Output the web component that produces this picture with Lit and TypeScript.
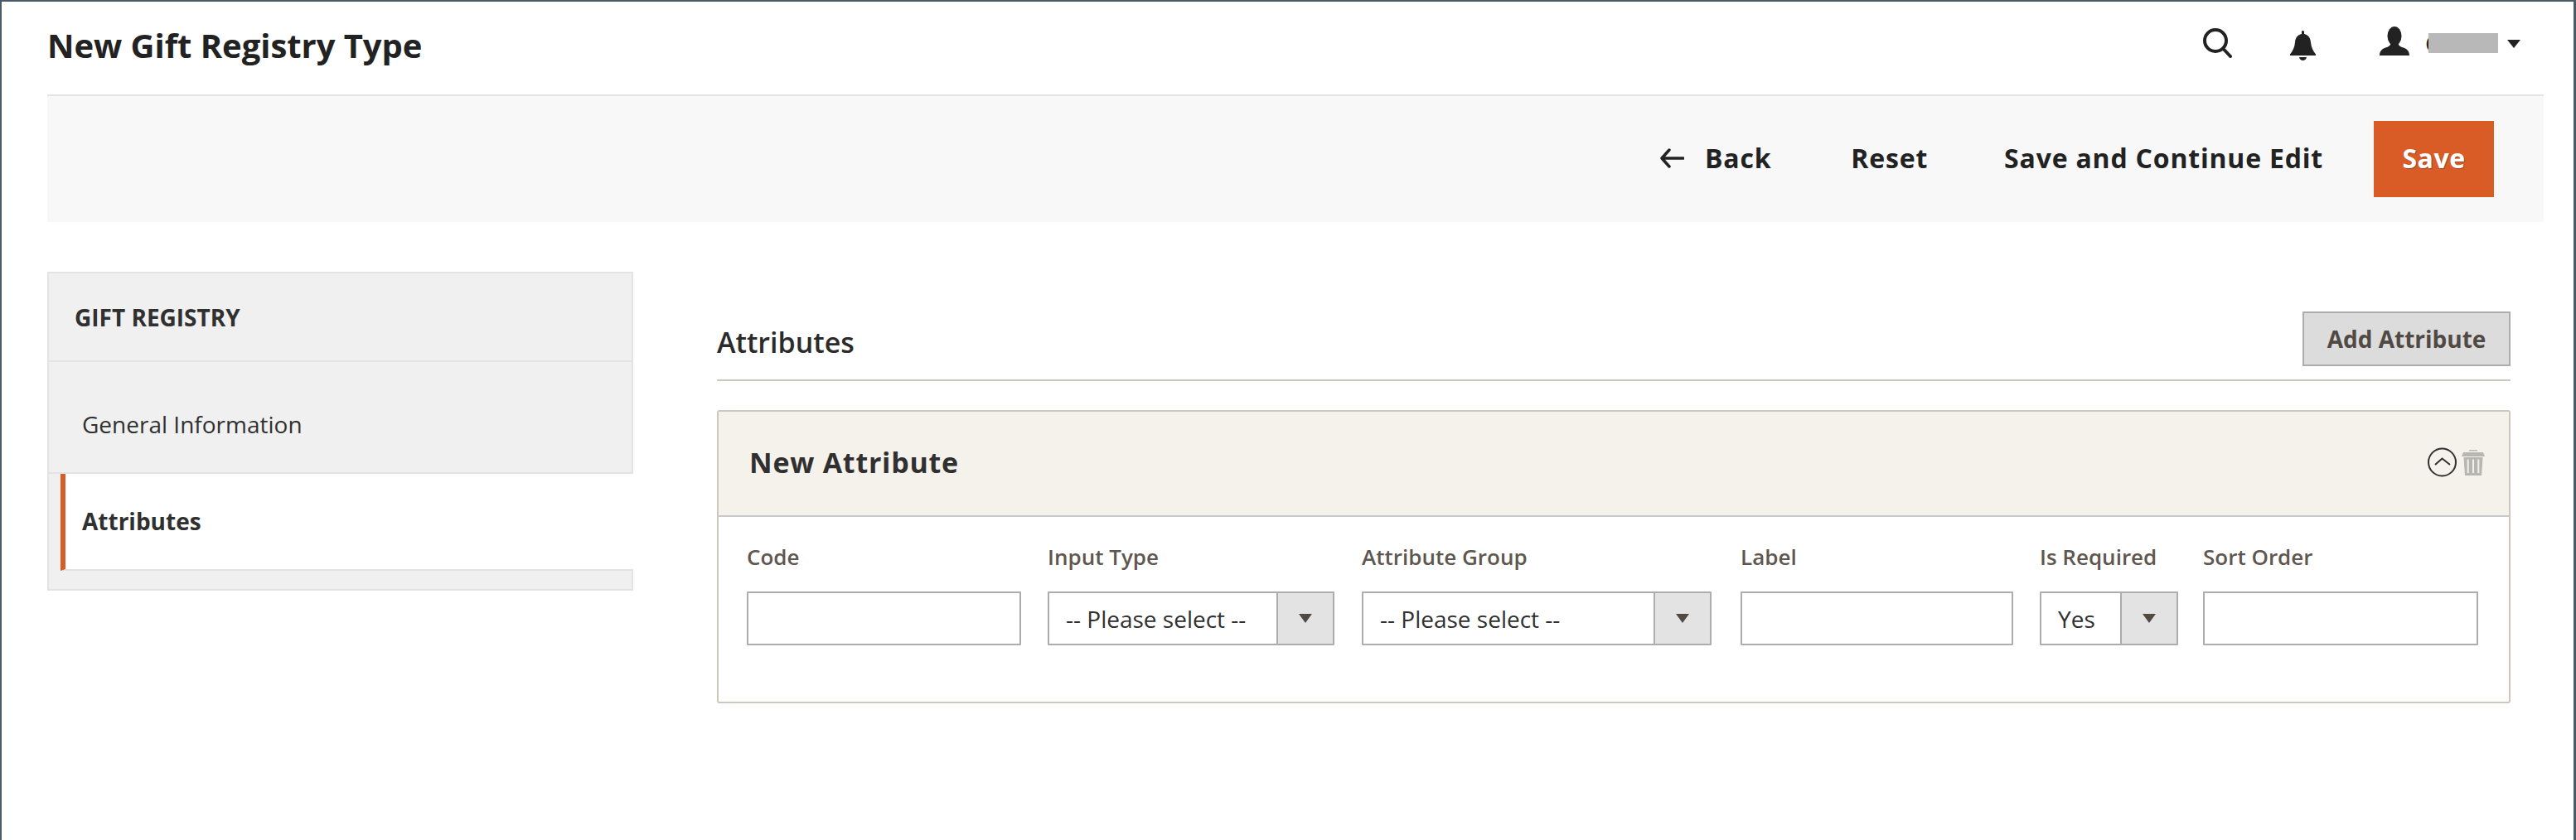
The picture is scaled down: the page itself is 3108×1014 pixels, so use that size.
import { LitElement, html, css } from "lit";
import { customElement } from "lit/decorators.js";

@customElement("app-root")
export class AppRoot extends LitElement {
  static styles = css`
    :host { display: block; font-family: "Open Sans", sans-serif; color: #303030; }
    * { box-sizing: border-box; }
    .page { height: 1014px; background: #fff; border: solid #4a5a68; border-width: 2px 3px 0 2px; padding: 0 36px 0 55px; }
    .top { height: 112px; display: flex; align-items: flex-start; padding-right: 28px; }
    h1 { margin: 0; padding-top: 25px; font-size: 40px; line-height: 55px; font-weight: 700; color: #222; flex: 1; letter-spacing: -0.05px; }
    .search { margin-top: 32px; width: 35px; height: 36px; }
    .bell { margin: 35px 0 0 70px; width: 31px; height: 36px; }
    .user { margin: 30px 0 0 77px; width: 36px; height: 35px; }
    .name { position: relative; margin: 38px 0 0 21px; width: 86px; height: 24px; }
    .name span { position: absolute; left: -2px; top: -7px; font-size: 28px; line-height: 38px; color: #222; }
    .name i { position: absolute; left: 2px; top: 0; width: 84px; height: 24px; background: #b8b8b8; }
    .caret { margin: 46px 0 0 11px; width: 16px; height: 10px; }

    .toolbar { height: 154px; background: #f8f8f8; border-top: 2px solid #e3e3e3; display: flex; align-items: center; justify-content: flex-end; padding-right: 60px; font-size: 32px; font-weight: 700; color: #222; letter-spacing: 0.8px; }
    .back { display: flex; align-items: center; margin: 0 96px 3px 0; }
    .back svg { width: 29px; height: 24px; margin-right: 25px; }
    .reset { margin: 0 92px 3px 0; }
    .cont { margin: 0 61px 3px 0; }
    .save { width: 145px; height: 92px; background: #d95c27; color: #fff; display: flex; align-items: center; justify-content: center; padding-bottom: 3px; letter-spacing: 0.5px; text-shadow: 1px 1px 0 #9c4a26; }

    .content { display: flex; align-items: flex-start; padding-top: 60px; }
    .side { width: 707px; height: 385px; margin-right: 101px; background: #f0f0f0; border: 2px solid #e3e3e3; font-size: 28px; }
    .side-head { height: 107px; border-bottom: 2px solid #e3e3e3; display: flex; align-items: center; padding-left: 31px; font-weight: 700; margin-right: -2px; }
    .item { height: 135px; display: flex; align-items: center; padding: 17px 0 0 40px; border-bottom: 2px solid #e3e3e3; }
    .item.active { height: 117px; margin: 0 -2px 0 14px; padding: 0 0 2px 20px; background: #fff; border-left: 6px solid #d95c27; font-weight: 700; }

    .main { width: 2164px; padding-top: 48px; }
    .main-head { height: 84px; display: flex; justify-content: space-between; align-items: flex-start; border-bottom: 2px solid #ccc8bc; }
    .main-head h2 { margin: 0; padding-top: 14px; font-size: 34px; line-height: 46px; font-weight: 600; color: #2b2b2b; }
    .add { width: 251px; height: 66px; background: #dcdcdc; border: 2px solid #adadad; color: #514943; font-size: 28px; font-weight: 700; display: flex; align-items: center; justify-content: center; }

    .card { margin-top: 35px; border: 2px solid #ccc8bc; border-radius: 3px; }
    .card-head { height: 127px; background: #f5f2ec; border-bottom: 2px solid #c8c8c8; display: flex; align-items: center; justify-content: space-between; padding: 0 29px 3px 37px; }
    .card-head h3 { margin: 0; font-size: 34px; line-height: 46px; font-weight: 700; color: #303030; letter-spacing: 0.75px; }
    .tools { display: flex; align-items: center; gap: 6px; }
    .tools .up { width: 35px; height: 36px; }
    .tools .del { width: 28px; height: 31px; }
    .fields { display: flex; padding: 29px 0 68px 34px; }
    .f label { display: block; height: 61px; font-size: 26px; line-height: 38px; font-weight: 600; color: #5f574f; }
    .input { display: block; width: 100%; height: 65px; border: 2px solid #adadad; border-radius: 1px; background: #fff; padding: 0 20px; font: 28px "Open Sans", sans-serif; }
    .select { display: flex; height: 65px; border: 2px solid #adadad; border-radius: 1px; background: #fff; }
    .select select { flex: 1; min-width: 0; appearance: none; border: 0; background: transparent; padding: 0 0 0 20px; font: 28px "Open Sans", sans-serif; color: #303030; outline: none; }
    .arrow { width: 68px; background: #e3e3e3; border-left: 2px solid #adadad; display: flex; align-items: center; justify-content: center; }
    .arrow svg { width: 16px; height: 11px; }
    .c1 { width: 331px; margin-right: 32px; }
    .c2 { width: 346px; margin-right: 33px; }
    .c3 { width: 422px; margin-right: 35px; }
    .c4 { width: 329px; margin-right: 32px; }
    .c5 { width: 167px; margin-right: 30px; }
    .c6 { width: 332px; }
  `;

  private sel(text: string) {
    return html`<div class="select">
      <select><option>${text}</option></select>
      <div class="arrow"><svg viewBox="0 0 16 11"><path d="M0 0H16L8 11Z" fill="#514943"/></svg></div>
    </div>`;
  }

  render() {
    return html`<div class="page">
      <div class="top">
        <h1>New Gift Registry Type</h1>
        <svg class="search" viewBox="0 0 35 36"><circle cx="15" cy="15" r="13" fill="none" stroke="#222" stroke-width="4"/><path d="M24.5 25L33 34" stroke="#222" stroke-width="4" stroke-linecap="round"/></svg>
        <svg class="bell" viewBox="0 0 31 36"><path fill="#222" d="M15.5 0c1 0 1.5.6 1.5 1.5V4c5 1 7.5 4.5 8 10 .5 6 2.5 10 6 14.5V30H0v-1.5c3.5-4.5 5.5-8.5 6-14.5 .5-5.5 3-9 8-10V1.5C14 .6 14.5 0 15.5 0zM11 32h9c-.5 2.5-2.5 4-4.5 4s-4-1.5-4.5-4z"/></svg>
        <svg class="user" viewBox="0 0 36 35"><ellipse cx="18" cy="11.5" rx="8.5" ry="11.5" fill="#222"/><path fill="#222" d="M0 35C0 29 4 26 9 25 12 24 13.5 22 14 19H22C22.5 22 24 24 27 25 32 26 36 29 36 35Z"/></svg>
        <div class="name"><span>C</span><i></i></div>
        <svg class="caret" viewBox="0 0 16 10"><path d="M0 0H16L8 10Z" fill="#222"/></svg>
      </div>
      <div class="toolbar">
        <div class="back"><svg viewBox="0 0 29 24"><path d="M11 2L2 12L11 22M2 12H28" fill="none" stroke="#222" stroke-width="3.5" stroke-linecap="round" stroke-linejoin="round"/></svg>Back</div>
        <div class="reset">Reset</div>
        <div class="cont">Save and Continue Edit</div>
        <div class="save">Save</div>
      </div>
      <div class="content">
        <div class="side">
          <div class="side-head">GIFT REGISTRY</div>
          <div class="item">General Information</div>
          <div class="item active">Attributes</div>
        </div>
        <div class="main">
          <div class="main-head">
            <h2>Attributes</h2>
            <div class="add">Add Attribute</div>
          </div>
          <div class="card">
            <div class="card-head">
              <h3>New Attribute</h3>
              <div class="tools">
                <svg class="up" viewBox="0 0 35 36"><circle cx="17.5" cy="18" r="16.5" fill="none" stroke="#303030" stroke-width="2"/><path d="M9 21L17.5 13.5L27 21" fill="none" stroke="#303030" stroke-width="2"/></svg>
                <svg class="del" viewBox="0 0 28 31"><path fill="#b8b6b0" fill-rule="evenodd" d="M9 0H19V1.5H9zM2 3H26L28 8H0ZM2.5 9H25.5L24 31H4ZM6.7 11.5V28H8.7V11.5ZM13 11.5V28H15V11.5ZM19.3 11.5V28H21.3V11.5Z"/></svg>
              </div>
            </div>
            <div class="fields">
              <div class="f c1"><label>Code</label><input class="input" /></div>
              <div class="f c2"><label>Input Type</label>${this.sel("-- Please select --")}</div>
              <div class="f c3"><label>Attribute Group</label>${this.sel("-- Please select --")}</div>
              <div class="f c4"><label>Label</label><input class="input" /></div>
              <div class="f c5"><label>Is Required</label>${this.sel("Yes")}</div>
              <div class="f c6"><label>Sort Order</label><input class="input" /></div>
            </div>
          </div>
        </div>
      </div>
    </div>`;
  }
}
